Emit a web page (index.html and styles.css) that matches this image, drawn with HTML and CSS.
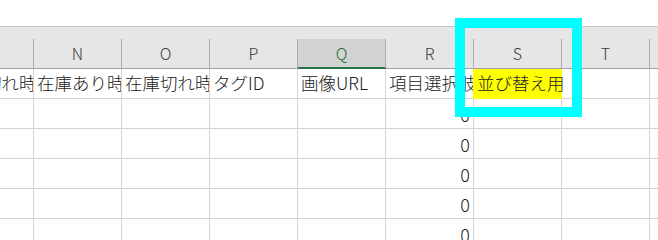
FILE: index.html
```html
<!DOCTYPE html>
<html lang="ja">
<head>
<meta charset="utf-8">
<link rel="stylesheet" href="styles.css">
</head>
<body>
<div class="top"></div>
<div class="band"></div>
<div class="sheet">
  <div class="grid heads">
    <div class="hc"></div>
    <div class="hc">N</div>
    <div class="hc">O</div>
    <div class="hc">P</div>
    <div class="hc sel">Q</div>
    <div class="hc">R</div>
    <div class="hc">S</div>
    <div class="hc">T</div>
    <div class="hc"></div>
  </div>
  <div class="grid row">
    <div class="c">在庫切れ時</div>
    <div class="c">在庫あり時</div>
    <div class="c">在庫切れ時</div>
    <div class="c">タグID</div>
    <div class="c">画像URL</div>
    <div class="c yl-edge">項目選択肢</div>
    <div class="c yl">並び替え用</div>
    <div class="c"></div>
    <div class="c"></div>
  </div>
  <div class="grid row">
    <div class="c"></div><div class="c"></div><div class="c"></div><div class="c"></div><div class="c"></div>
    <div class="c num">0</div><div class="c"></div><div class="c"></div><div class="c"></div>
  </div>
  <div class="grid row">
    <div class="c"></div><div class="c"></div><div class="c"></div><div class="c"></div><div class="c"></div>
    <div class="c num">0</div><div class="c"></div><div class="c"></div><div class="c"></div>
  </div>
  <div class="grid row">
    <div class="c"></div><div class="c"></div><div class="c"></div><div class="c"></div><div class="c"></div>
    <div class="c num">0</div><div class="c"></div><div class="c"></div><div class="c"></div>
  </div>
  <div class="grid row">
    <div class="c"></div><div class="c"></div><div class="c"></div><div class="c"></div><div class="c"></div>
    <div class="c num">0</div><div class="c"></div><div class="c"></div><div class="c"></div>
  </div>
  <div class="grid row">
    <div class="c"></div><div class="c"></div><div class="c"></div><div class="c"></div><div class="c"></div>
    <div class="c num">0</div><div class="c"></div><div class="c"></div><div class="c"></div>
  </div>
</div>
<div class="highlight"></div>
</body>
</html>
```
FILE: styles.css
```css
html, body {
  margin: 0;
  padding: 0;
  background: #ffffff;
  overflow: hidden;
  width: 658px;
  height: 240px;
}

body {
  position: relative;
  font-family: "Noto Sans CJK JP", "Noto Sans", sans-serif;
  color: #222222;
}

.top {
  height: 26px;
  border-bottom: 1px solid #c6c6c6;
}

.band {
  height: 12px;
  background: #e6e6e6;
}

.sheet {
  margin-left: -54px;
}

.grid {
  display: grid;
  grid-template-columns: repeat(9, 88px);
}

.heads {
  background: #e6e6e6;
}

.hc {
  height: 29px;
  border-right: 1px solid #ababab;
  border-bottom: 1px solid #a2a2a2;
  font-size: 16px;
  font-weight: 300;
  line-height: 29px;
  text-align: center;
  color: #3a3a3a;
}

.hc.sel {
  height: 28px;
  background: #d2d2d2;
  border-bottom: 2px solid #217346;
  color: #1c6a3e;
}

.c {
  height: 29px;
  border-right: 1px solid #d4d4d4;
  border-bottom: 1px solid #d4d4d4;
  font-size: 17.5px;
  font-weight: 300;
  line-height: 27px;
  padding: 0 3px;
  white-space: nowrap;
  overflow: hidden;
}

.c.yl {
  background: #ffff00;
  border-bottom-color: #ffff00;
  border-right-color: #ffff00;
  overflow: visible;
}

.c.yl-edge {
  border-right-color: #ffff00;
}

.c.num {
  text-align: right;
  font-size: 18px;
  line-height: 30px;
}

.highlight {
  position: absolute;
  left: 455px;
  top: 18px;
  width: 107px;
  height: 79px;
  border: 10px solid #00ffff;
}
```
